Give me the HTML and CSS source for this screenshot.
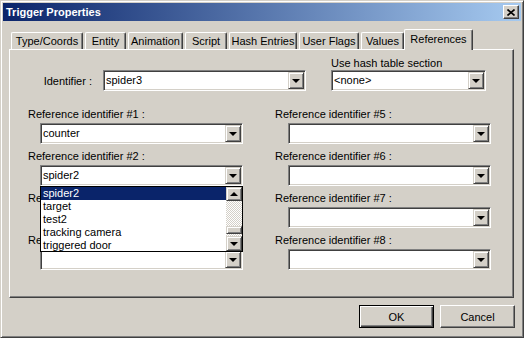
FILE: index.html
```html
<!DOCTYPE html>
<html lang="en">
<head>
    <meta charset="UTF-8">
    <title>Trigger Properties</title>
    <link rel="stylesheet" href="styles.css">
</head>
<body>
    <div class="window">
        <div class="titlebar">
            <span class="title">Trigger Properties</span>
            <div class="close-btn">
                <svg width="8" height="7" viewBox="0 0 8 7"><path d="M0.5 0.5 L7.5 6.5 M7.5 0.5 L0.5 6.5" stroke="#000" stroke-width="1.6" fill="none"/></svg>
            </div>
        </div>

        <div class="tabs">
            <div class="tab">Type/Coords</div>
            <div class="tab">Entity</div>
            <div class="tab">Animation</div>
            <div class="tab">Script</div>
            <div class="tab">Hash Entries</div>
            <div class="tab">User Flags</div>
            <div class="tab">Values</div>
            <div class="tab active">References</div>
        </div>

        <div class="panel">
            <div class="top-row">
                <div class="id-field">
                    <label class="id-label">Identifier :</label>
                    <div class="combo"><span class="combo-text">spider3</span><span class="combo-btn"></span></div>
                </div>
                <div class="hash-field">
                    <label class="field-label">Use hash table section</label>
                    <div class="combo combo-hash"><span class="combo-text">&lt;none&gt;</span><span class="combo-btn"></span></div>
                </div>
            </div>

            <div class="ref-grid">
                <div class="field">
                    <label class="field-label">Reference identifier #1 :</label>
                    <div class="combo"><span class="combo-text">counter</span><span class="combo-btn"></span></div>
                </div>
                <div class="field open">
                    <label class="field-label">Reference identifier #2 :</label>
                    <div class="combo"><span class="combo-text">spider2</span><span class="combo-btn"></span></div>
                    <div class="drop-list">
                        <div class="list-items">
                            <div class="list-item selected">spider2</div>
                            <div class="list-item">target</div>
                            <div class="list-item">test2</div>
                            <div class="list-item">tracking camera</div>
                            <div class="list-item">triggered door</div>
                        </div>
                        <div class="scrollbar">
                            <div class="sb-btn sb-up"><span class="arrow-up"></span></div>
                            <div class="sb-track track-top"></div>
                            <div class="sb-thumb"></div>
                            <div class="sb-track track-bottom"></div>
                            <div class="sb-btn sb-down"><span class="arrow-down"></span></div>
                        </div>
                    </div>
                </div>
                <div class="field">
                    <label class="field-label">Reference identifier #3 :</label>
                    <div class="combo"><span class="combo-text"></span><span class="combo-btn"></span></div>
                </div>
                <div class="field">
                    <label class="field-label">Reference identifier #4 :</label>
                    <div class="combo"><span class="combo-text"></span><span class="combo-btn"></span></div>
                </div>
                <div class="field right">
                    <label class="field-label">Reference identifier #5 :</label>
                    <div class="combo"><span class="combo-text"></span><span class="combo-btn"></span></div>
                </div>
                <div class="field right">
                    <label class="field-label">Reference identifier #6 :</label>
                    <div class="combo"><span class="combo-text"></span><span class="combo-btn"></span></div>
                </div>
                <div class="field right">
                    <label class="field-label">Reference identifier #7 :</label>
                    <div class="combo"><span class="combo-text"></span><span class="combo-btn"></span></div>
                </div>
                <div class="field right">
                    <label class="field-label">Reference identifier #8 :</label>
                    <div class="combo"><span class="combo-text"></span><span class="combo-btn"></span></div>
                </div>
            </div>
        </div>

        <div class="buttons">
            <button class="btn default">OK</button>
            <button class="btn">Cancel</button>
        </div>
    </div>
</body>
</html>
```

FILE: styles.css
```css
body {
    margin: 0;
    font-family: "Liberation Sans", Arial, sans-serif;
    font-size: 11px;
    color: #000;
    background: #d4d0c8;
}
.window {
    width: 524px;
    height: 338px;
    box-sizing: border-box;
    background: #d4d0c8;
    border: 1px solid;
    border-color: #d4d0c8 #404040 #404040 #d4d0c8;
    box-shadow: inset 1px 1px #fff, inset -1px -1px #808080;
    padding: 2px;
}

/* title bar */
.titlebar {
    height: 18px;
    display: flex;
    align-items: center;
    justify-content: space-between;
    padding: 0 2px 0 3px;
    background: linear-gradient(to right, #0a246a, #a6caf0);
    color: #fff;
    font-weight: bold;
}
.close-btn {
    width: 16px;
    height: 14px;
    box-sizing: border-box;
    display: flex;
    align-items: center;
    justify-content: center;
    background: #d4d0c8;
    border: 1px solid;
    border-color: #fff #404040 #404040 #fff;
    box-shadow: inset -1px -1px #808080;
}
.close-btn svg { display: block; }

/* tabs */
.tabs {
    display: flex;
    align-items: flex-end;
    height: 20px;
    margin-top: 8px;
    padding-left: 8px;
}
.tab {
    height: 17px;
    box-sizing: border-box;
    margin-right: 2px;
    padding-top: 1px;
    line-height: 14px;
    text-align: center;
    border-top: 1px solid #fff;
    border-left: 1px solid #fff;
    border-right: 1px solid #404040;
    border-radius: 2px 2px 0 0;
    box-shadow: inset -1px 0 #808080;
}
.tab:nth-child(1) { width: 72px; }
.tab:nth-child(2) { width: 41px; }
.tab:nth-child(3) { width: 55px; }
.tab:nth-child(4) { width: 42px; }
.tab:nth-child(5) { width: 68px; }
.tab:nth-child(6) { width: 60px; }
.tab:nth-child(7) { width: 43px; }
.tab.active {
    width: 69px;
    height: 21px;
    margin-left: -2px;
    margin-bottom: -1px;
    padding-top: 2px;
    position: relative;
    z-index: 1;
    background: #d4d0c8;
}

/* panel */
.panel {
    width: 505px;
    height: 249px;
    box-sizing: border-box;
    margin-left: 6px;
    padding-top: 7px;
    border: 1px solid;
    border-color: #fff #404040 #404040 #fff;
    box-shadow: inset -1px -1px #808080;
}
.top-row {
    display: flex;
    align-items: flex-end;
}
.id-field {
    display: flex;
    align-items: center;
}
.id-label {
    width: 82px;
    margin-right: 11px;
    text-align: right;
}
.hash-field { margin-left: 25px; }
.field-label {
    display: block;
    line-height: 13px;
    margin-bottom: 0;
}
.hash-field .field-label { margin-bottom: 0; }

.ref-grid {
    display: grid;
    grid-auto-flow: column;
    grid-template-rows: repeat(4, 36px);
    grid-template-columns: 215px 216px;
    column-gap: 32px;
    row-gap: 6px;
    margin-top: 17px;
    padding-left: 18px;
}
.field .field-label { margin-bottom: 2px; }
.field .combo { margin-left: 12px; }
.field.right .combo { margin-left: 13px; }
.field.open { position: relative; z-index: 2; }

/* combo box */
.combo {
    width: 203px;
    height: 21px;
    box-sizing: border-box;
    display: flex;
    padding: 1px;
    background: #fff;
    border: 1px solid;
    border-color: #808080 #fff #fff #808080;
    box-shadow: inset 1px 1px #404040, inset -1px -1px #d4d0c8;
}
.combo-hash { width: 155px; }
.combo-text {
    flex: 1;
    line-height: 17px;
    padding-left: 1px;
}
.combo-btn,
.sb-btn {
    box-sizing: border-box;
    display: flex;
    align-items: center;
    justify-content: center;
    background: #d4d0c8;
    border: 1px solid;
    border-color: #d4d0c8 #404040 #404040 #d4d0c8;
    box-shadow: inset 1px 1px #fff, inset -1px -1px #808080;
}
.combo-btn {
    width: 16px;
    height: 17px;
}
.combo-btn::after,
.arrow-down {
    content: "";
    width: 0;
    height: 0;
    border-left: 4px solid transparent;
    border-right: 4px solid transparent;
    border-top: 4px solid #000;
}
.arrow-up {
    width: 0;
    height: 0;
    border-left: 4px solid transparent;
    border-right: 4px solid transparent;
    border-bottom: 4px solid #000;
}

/* dropdown list */
.drop-list {
    position: absolute;
    left: 12px;
    top: 100%;
    width: 203px;
    height: 66px;
    box-sizing: border-box;
    display: flex;
    background: #fff;
    border: 1px solid #000;
}
.list-items { flex: 1; }
.list-item {
    line-height: 13px;
    padding-left: 2px;
}
.list-item.selected {
    background: #0a246a;
    color: #fff;
}
.scrollbar {
    width: 16px;
    display: flex;
    flex-direction: column;
}
.sb-up { height: 14px; }
.sb-down { height: 15px; }
.sb-track {
    background: repeating-conic-gradient(#d4d0c8 0 25%, #fff 0 50%) 0 0 / 2px 2px;
}
.track-top { height: 25px; }
.track-bottom { height: 2px; }
.sb-thumb {
    height: 8px;
    box-sizing: border-box;
    background: #d4d0c8;
    border: 1px solid;
    border-color: #d4d0c8 #404040 #404040 #d4d0c8;
    box-shadow: inset 1px 1px #fff, inset -1px -1px #808080;
}

/* buttons */
.buttons {
    display: flex;
    justify-content: flex-end;
    gap: 6px;
    margin-top: 7px;
    padding-right: 6px;
}
.btn {
    width: 75px;
    height: 23px;
    box-sizing: border-box;
    padding: 0;
    font-family: "Liberation Sans", Arial, sans-serif;
    font-size: 11px;
    color: #000;
    background: #d4d0c8;
    border: 1px solid;
    border-color: #fff #404040 #404040 #fff;
    box-shadow: inset -1px -1px #808080;
}
.btn.default {
    border-color: #000;
    box-shadow: inset 1px 1px #fff, inset -1px -1px #404040, inset -2px -2px #808080;
}
```
